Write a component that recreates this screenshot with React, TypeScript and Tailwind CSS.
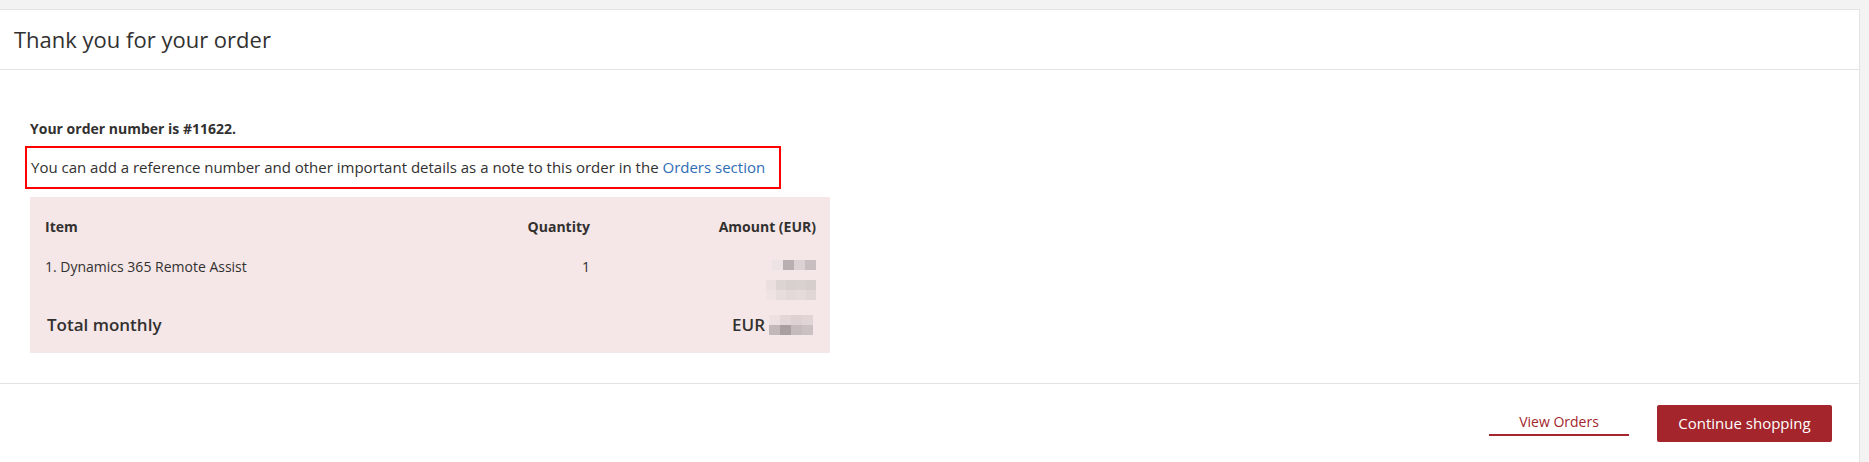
import React from 'react';

// pixelated placeholder for the blurred amounts
function Blur({ rows, cell = 11, h = 10 }: { rows: string[][]; cell?: number; h?: number }) {
  return (
    <div className="flex flex-col">
      {rows.map((row, i) => (
        <div key={i} className="flex">
          {row.map((c, j) => (
            <div key={j} style={{ width: cell, height: h, background: c }} />
          ))}
        </div>
      ))}
    </div>
  );
}

export default function App() {
  return (
    <div className="min-h-screen bg-[#f3f3f3] pt-[9px] pr-[9px] font-['Open_Sans',sans-serif] text-[#323130]">
      <div className="bg-white border-t border-r border-[#e3e3e3] min-h-[453px]">
        <div className="h-[60px] px-[14px] flex items-center border-b border-[#e3e3e3]">
          <h1 className="text-[22px] font-normal text-[#323130]">Thank you for your order</h1>
        </div>

        <div className="px-[25px] pt-[49px] pb-[30px] border-b border-[#e3e3e3]">
          <p className="pl-[5px] text-[14px] leading-[20px] font-bold">Your order number is #11622.</p>

          <div className="mt-[7px] inline-block border-2 border-[#f00] pl-[4px] pr-[14px] pt-[9px] pb-[10px]">
            <p className="text-[15px] leading-[20px] font-medium">
              You can add a reference number and other important details as a note to this order in the{' '}
              <a href="#" className="text-[#2f6db5]">Orders section</a>
            </p>
          </div>

          <div className="ml-[5px] mt-[8px] w-[800px] bg-[#f5e6e7] pl-[15px] pr-[14px] pt-[20px] pb-[16px]">
            <div className="grid grid-cols-[1fr_120px_226px] text-[14px] leading-[20px] font-bold">
              <div>Item</div>
              <div className="text-right">Quantity</div>
              <div className="text-right">Amount (EUR)</div>
            </div>

            <div className="grid grid-cols-[1fr_120px_226px] text-[14px] leading-[20px] mt-[20px]">
              <div>1. Dynamics 365 Remote Assist</div>
              <div className="text-right">1</div>
              <div className="flex flex-col items-end pt-[3px]">
                <Blur rows={[['#ede3e4', '#b9afb0', '#dcd2d3', '#c9bebf']]} />
                <div className="mt-[10px]">
                  <Blur
                    cell={10}
                    rows={[
                      ['#ecdfe0', '#dcd3d3', '#d8cfcf', '#d9d0d0', '#d6cdcd'],
                      ['#efe3e4', '#e8dddd', '#e3d9d9', '#e5dbdb', '#e0d6d6'],
                    ]}
                  />
                </div>
              </div>
            </div>

            <div className="flex justify-between items-center mt-[13px] leading-[24px]">
              <div className="text-[17px] font-semibold pl-[2px]">Total monthly</div>
              <div className="flex items-center gap-[4px] pr-[3px]">
                <span className="text-[17px] font-semibold">EUR</span>
                <Blur
                  rows={[
                    ['#ece0e1', '#e2d6d7', '#ddd1d2', '#e0d4d5'],
                    ['#c2b8b9', '#a99fa0', '#c5bbbc', '#cbc1c2'],
                  ]}
                />
              </div>
            </div>
          </div>
        </div>

        <div className="flex justify-end items-start pt-[21px] pr-[27px] gap-[28px]">
          <a href="#" className="mt-[7px] w-[140px] text-center text-[14px] leading-[20px] text-[#a4262c] border-b-2 border-[#a4262c] pb-[2px]">
            View Orders
          </a>
          <button className="h-[37px] w-[175px] rounded-[2px] bg-[#a4262c] text-white text-[15px]">
            Continue shopping
          </button>
        </div>
      </div>
    </div>
  );
}
